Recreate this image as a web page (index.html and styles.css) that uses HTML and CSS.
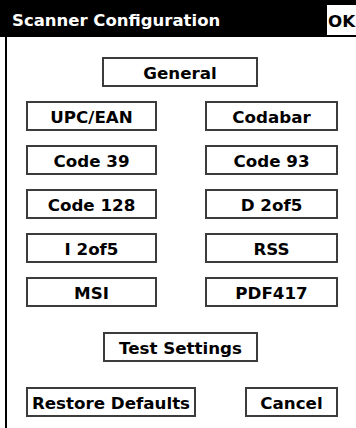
FILE: index.html
```html
<!DOCTYPE html>
<html lang="en">
<head>
  <meta charset="UTF-8" />
  <meta name="viewport" content="width=device-width, initial-scale=1.0"/>
  <title>Scanner Configuration</title>
  <link rel="stylesheet" href="styles.css">
</head>
<body>

  <div id="titleBar">
    <span class="title">Scanner Configuration</span>
    <button class="okButton">OK</button>
  </div>

  <div id="panel">
    <button class="btn general">General</button>

    <div class="symbologies">
      <button class="btn">UPC/EAN</button>
      <button class="btn">Codabar</button>
      <button class="btn">Code 39</button>
      <button class="btn">Code 93</button>
      <button class="btn">Code 128</button>
      <button class="btn">D 2of5</button>
      <button class="btn">I 2of5</button>
      <button class="btn">RSS</button>
      <button class="btn">MSI</button>
      <button class="btn">PDF417</button>
    </div>

    <button class="btn test">Test Settings</button>

    <div class="bottomRow">
      <button class="btn restore">Restore Defaults</button>
      <button class="btn cancel">Cancel</button>
    </div>
  </div>

</body>
</html>
```

FILE: styles.css
```css
body {
  margin: 0;
  padding: 0;
  font-family: "DejaVu Sans", Verdana, sans-serif;
  font-weight: bold;
  font-size: 16.7px;
  background: white;
  color: black;
  height: 428px;
  overflow: hidden;
}

#titleBar {
  display: flex;
  align-items: flex-start;
  height: 37px;
  background: black;
  color: white;
}

.title {
  padding-left: 12px;
  padding-top: 5px;
  line-height: 32px;
  font-size: 16.5px;
}

.okButton {
  margin-left: auto;
  margin-top: 5px;
  width: 29px;
  height: 30px;
  padding: 2px 0 0 1px;
  border: none;
  background: white;
  color: black;
  font: inherit;
  text-align: left;
  line-height: 28px;
  overflow: hidden;
  white-space: nowrap;
}

#panel {
  display: flex;
  flex-direction: column;
  align-items: flex-start;
  margin-left: 5px;
  border-left: 2px solid black;
  padding: 20px 18px 0 19px;
  height: 391px;
  box-sizing: border-box;
}

.btn {
  box-sizing: border-box;
  height: 30px;
  padding: 2px 0 0;
  border: 2px solid #3c3c3c;
  background: white;
  color: black;
  font: inherit;
  line-height: 24px;
  text-align: center;
  white-space: nowrap;
}

.general {
  width: 156px;
  margin-left: 76px;
}

.symbologies {
  display: grid;
  grid-template-columns: 131px 133px;
  column-gap: 48px;
  row-gap: 14px;
  margin-top: 14px;
}

.test {
  width: 155px;
  margin-left: 77px;
  margin-top: 25px;
}

.bottomRow {
  display: flex;
  gap: 49px;
  margin-top: 25px;
}

.restore {
  width: 170px;
}

.cancel {
  width: 93px;
}
```
